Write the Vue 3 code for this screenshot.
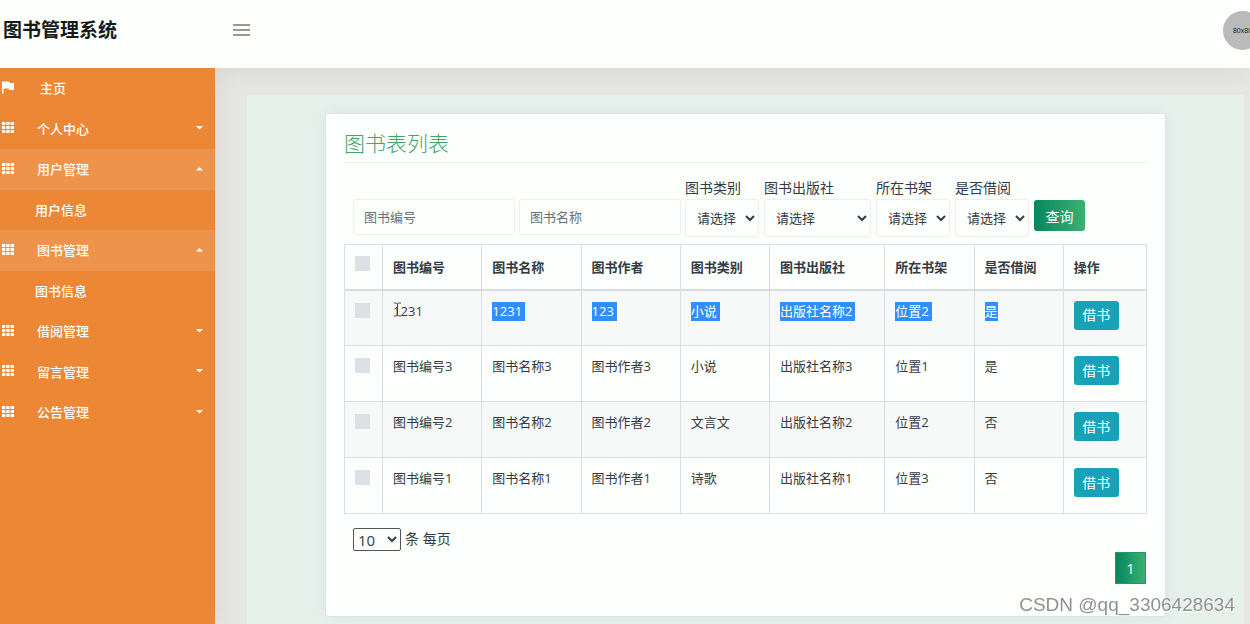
<script setup>
import { ref } from 'vue'

const menu = [
  { label: '主页', icon: 'flag' },
  { label: '个人中心', icon: 'grid' },
  { label: '用户管理', icon: 'grid', open: true, children: ['用户信息'] },
  { label: '图书管理', icon: 'grid', open: true, children: ['图书信息'] },
  { label: '借阅管理', icon: 'grid' },
  { label: '留言管理', icon: 'grid' },
  { label: '公告管理', icon: 'grid' },
]
const inputs = ['图书编号', '图书名称']
const selects = [
  { id: 'type', label: '图书类别' },
  { id: 'press', label: '图书出版社', wide: true },
  { id: 'shelf', label: '所在书架' },
  { id: 'lent', label: '是否借阅' },
]
const columns = ['图书编号', '图书名称', '图书作者', '图书类别', '图书出版社', '所在书架', '是否借阅']
const rows = [
  { cells: ['1231', '1231', '123', '小说', '出版社名称2', '位置2', '是'], marked: true },
  { cells: ['图书编号3', '图书名称3', '图书作者3', '小说', '出版社名称3', '位置1', '是'] },
  { cells: ['图书编号2', '图书名称2', '图书作者2', '文言文', '出版社名称2', '位置2', '否'] },
  { cells: ['图书编号1', '图书名称1', '图书作者1', '诗歌', '出版社名称1', '位置3', '否'] },
]
const pageSize = ref('10')
</script>

<template>
  <div class="page">
    <header class="topbar">
      <h1 class="brand">图书管理系统</h1>
      <button class="toggle" type="button" aria-label="菜单">
        <svg width="17" height="12" viewBox="0 0 17 12"><path d="M0 1H17M0 6H17M0 11H17" stroke="#777" stroke-width="1.500" /></svg>
      </button>
      <div class="avatar">80x80</div>
    </header>

    <div class="body">
      <nav class="sidebar">
        <template v-for="item in menu" :key="item.label">
          <a href="#" class="item" :class="{ open: item.open, home: item.icon === 'flag' }">
            <svg v-if="item.icon === 'flag'" class="icon" width="12" height="13" viewBox="0 0 12 13"><path d="M0 0.500H7L7.500 2H12V9H7L6.500 7.500H1.500V12.500H0Z" fill="#fff" /></svg>
            <svg v-else class="icon" width="12" height="11" viewBox="0 0 12 11"><path d="M0 0h3.300v3H0zM4.300 0h3.300v3H4.300zM8.600 0H12v3H8.600zM0 4h3.300v3H0zM4.300 4h3.300v3H4.300zM8.600 4H12v3H8.600zM0 8h3.300v3H0zM4.300 8h3.300v3H4.300zM8.600 8H12v3H8.600z" fill="#fff" /></svg>
            <span class="name">{{ item.label }}</span>
            <svg v-if="item.icon === 'grid'" class="caret" width="7" height="4" viewBox="0 0 7 4"><path :d="item.open ? 'M0 3.500L3.500 0L7 3.500Z' : 'M0 0H7L3.500 3.500Z'" fill="#fff" /></svg>
          </a>
          <a v-for="child in item.children" :key="child" href="#" class="item child">{{ child }}</a>
        </template>
      </nav>

      <main class="content">
        <div class="panel">
          <section class="card">
            <h2 class="title">图书表列表</h2>

            <form class="filters" @submit.prevent>
              <input v-for="name in inputs" :key="name" class="box text" type="text" :placeholder="name" :aria-label="name" />
              <div v-for="s in selects" :key="s.id" class="field" :class="{ wide: s.wide }">
                <label :for="s.id">{{ s.label }}</label>
                <select :id="s.id" class="box"><option>请选择</option></select>
              </div>
              <button class="search" type="submit">查询</button>
            </form>

            <table class="books">
              <colgroup>
                <col class="c-check" /><col class="c-text" /><col class="c-text" /><col class="c-text" /><col class="c-mid" />
                <col class="c-press" /><col class="c-mid" /><col class="c-mid" /><col class="c-act" />
              </colgroup>
              <thead>
                <tr>
                  <th><input type="checkbox" aria-label="全选" /></th>
                  <th v-for="c in columns" :key="c">{{ c }}</th>
                  <th>操作</th>
                </tr>
              </thead>
              <tbody>
                <tr v-for="(row, r) in rows" :key="r">
                  <td><input type="checkbox" :aria-label="row.cells[0]" /></td>
                  <td v-for="(cell, i) in row.cells" :key="i">
                    <span class="value" :class="{ marked: row.marked && i > 0, spaced: row.marked && i < 6 }">{{ cell }}<svg v-if="row.marked && i === 0" class="cursor" width="9" height="15" viewBox="0 0 9 15"><path d="M1 1H3.500L4.500 2L5.500 1H8M4.500 2V13M1 14H3.500L4.500 13L5.500 14H8" fill="none" stroke="#444" /></svg></span>
                  </td>
                  <td><button class="borrow" type="button">借书</button></td>
                </tr>
              </tbody>
            </table>

            <div class="size">
              <select id="size" v-model="pageSize"><option>10</option></select>
              <label for="size">条 每页</label>
            </div>
            <div class="pager"><button type="button">1</button></div>
          </section>
        </div>
      </main>
    </div>
    <div class="watermark">CSDN @qq_3306428634</div>
  </div>
</template>

<style>
body { margin: 0; }
</style>

<style scoped>
* { box-sizing: border-box; }
.page {
  min-height: 100vh;
  display: flex;
  flex-direction: column;
  overflow: hidden;
  background: #e6e7e5;
  color: #343b44;
  font-family: "Open Sans", "Noto Sans CJK SC", sans-serif;
  font-size: 13px;
}
button, input, select { font: inherit; color: inherit; margin: 0; }
button { border: 0; padding: 0; cursor: pointer; }
a { color: inherit; text-decoration: none; }
.topbar {
  position: relative;
  display: flex;
  align-items: center;
  height: 68px;
  padding: 0 0 8px 3px;
  background: #fdfffd;
  box-shadow: 0 2px 26px rgba(0, 0, 0, 0.07);
}
.brand { width: 230px; margin: 0; font-size: 19px; line-height: 28px; font-weight: 700; color: #161b1a; }
.toggle { display: flex; background: none; }
.avatar {
  display: flex;
  align-items: center;
  justify-content: center;
  flex: none;
  width: 39px;
  height: 39px;
  margin: 0 -12px 0 auto;
  border-radius: 50%;
  background: #b9bab9;
  color: #222;
  font: 7px "Liberation Sans", sans-serif;
}
.body { flex: 1; display: flex; }
.sidebar { position: relative; flex: none; width: 215px; background: #eb8735; color: #fff; box-shadow: 2px 0 26px rgba(0, 0, 0, 0.07); clip-path: inset(0 -40px 0 0); }
.item { display: flex; align-items: center; height: 41px; padding: 0 12px 0 2px; font-weight: 500; line-height: 20px; }
.item:nth-child(even) { height: 40px; }
.item.open { background: #ee934b; }
.item.child { padding-left: 35px; }
.icon { flex: none; margin-bottom: 3px; }
.name { margin: 0 0 1px 23px; }
.home .name { margin-left: 26px; }
.caret { margin: 0 0 2px auto; }
.content { flex: 1; min-width: 0; display: flex; padding: 27px 6px 0 32px; }
.panel { flex: 1; min-width: 0; padding: 18px 78px 7px; background: #e7f1ec; }
.card {
  height: 100%;
  padding: 18px 18px 32px;
  border: 1px solid #dce4ec;
  border-radius: 3px;
  background: #fdfffd;
  box-shadow: 0 0 18px rgba(130, 165, 190, 0.15);
}
.title { margin: 0 0 16px; padding-bottom: 8px; border-bottom: 1px solid #eaf0ef; color: #45a268; font-size: 21px; line-height: 22px; font-weight: 300; }
.filters { display: flex; align-items: flex-start; margin-bottom: 7px; padding-left: 9px; gap: 4px; }
.box { display: block; width: 100%; height: 38px; padding: 0 6px 0 7px; border: 1px solid #eaf0ee; border-radius: 3px; background: #fdfffd; }
.text { width: 162px; height: 36px; margin-top: 20px; padding: 0 10px; }
.text::placeholder { color: #697079; opacity: 1; }
.field { width: 74px; margin-right: 1px; }
.field.wide { width: 107px; }
.field label { display: block; height: 20px; font-size: 14px; line-height: 18px; white-space: nowrap; }
.search { width: 51px; height: 31px; margin-top: 21px; border-radius: 3px; background: linear-gradient(90deg, #078760, #3bb071); color: #fff; font-size: 14px; }
.books { width: 100%; border-collapse: collapse; table-layout: fixed; }
.c-check { width: 38px; }
.c-text { width: 99px; }
.c-mid { width: 89px; }
.c-press { width: 115px; }
.c-act { width: 83px; }
.books th, .books td { padding: 10px; border: 1px solid #d9dde4; text-align: left; line-height: 20px; white-space: nowrap; }
.books th { height: 45px; border-bottom-width: 2px; font-weight: 600; }
.books td { height: 56px; vertical-align: top; }
.books tbody tr:nth-child(odd) { background: #f7f9f9; }
.books input { display: block; appearance: none; width: 15px; height: 15px; background: #dde1e6; }
.books th input { margin-bottom: 6px; }
.books td input { margin-top: 2px; }
.value { display: inline-block; position: relative; line-height: 19px; }
.marked { background: #328efa; color: #fff; }
.marked.spaced { padding-right: 3px; }
.cursor { position: absolute; left: 0; top: 0; }
.borrow { display: block; width: 45px; height: 29px; border-radius: 3px; background: #17a2b8; color: #fff; font-size: 14px; }
.size { display: flex; gap: 4px; margin-top: 14px; padding-left: 9px; font-size: 14px; line-height: 22px; }
.size select { width: 48px; height: 23px; padding: 0; border: 1px solid #555; border-radius: 2px; background: #fdfffd; font-size: 15px; }
.pager { display: flex; justify-content: flex-end; margin-top: 1px; padding-right: 1px; }
.pager button { width: 31px; height: 32px; border: 1px solid #279565; background: linear-gradient(90deg, #078760, #3bb071); color: #fff; font-size: 14px; }
.watermark { position: fixed; right: 15px; bottom: 8px; color: #8e9291; font: 19px/22px "Liberation Sans", sans-serif; text-shadow: 1px 1px 0 #fff; }
</style>
